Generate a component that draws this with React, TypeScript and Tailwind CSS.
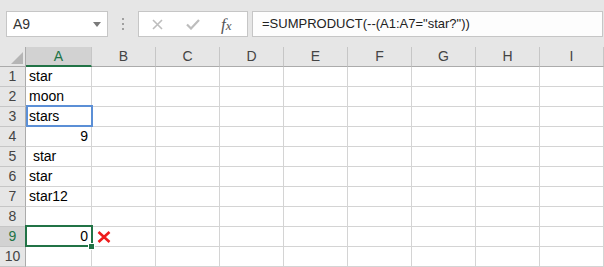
import React from 'react';

const COLS = ['A', 'B', 'C', 'D', 'E', 'F', 'G', 'H', 'I'];

// cell contents for column A, rows 1..10
const COL_A: { text: string; align?: 'right' }[] = [
  { text: 'star' },
  { text: 'moon' },
  { text: 'stars' },
  { text: '9', align: 'right' },
  { text: ' star' },
  { text: 'star' },
  { text: 'star12' },
  { text: '' },
  { text: '0', align: 'right' },
  { text: '' },
];

export default function App() {
  return (
    <div className="relative w-[604px] h-[267px] overflow-hidden bg-[#e6e6e6] font-['Liberation_Sans',Arial,sans-serif] text-[#222]">
      {/* formula bar */}
      <div className="h-[47px] flex items-start pt-[11px]">
        <div className="ml-[6px] w-[102px] h-[26px] bg-white border border-[#c6c6c6] flex items-center justify-between pl-[6px] pr-[6px]">
          <span className="text-[14px] text-[#333]">A9</span>
          <svg width="8" height="5" viewBox="0 0 8 5">
            <path d="M0 0 L8 0 L4 5 Z" fill="#7a7a7a" />
          </svg>
        </div>
        <div className="w-[30px] h-[26px] flex flex-col items-center justify-center gap-[3px]">
          <div className="w-[2px] h-[2px] bg-[#a0a0a0]" />
          <div className="w-[2px] h-[2px] bg-[#a0a0a0]" />
          <div className="w-[2px] h-[2px] bg-[#a0a0a0]" />
        </div>
        <div className="w-[110px] h-[26px] bg-white border border-[#c6c6c6] flex items-center">
          <svg className="ml-[13px]" width="11" height="11" viewBox="0 0 11 11">
            <path d="M1 1 L10 10 M10 1 L1 10" stroke="#bdbdbd" strokeWidth="1.6" />
          </svg>
          <svg className="ml-[23px]" width="14" height="11" viewBox="0 0 14 11">
            <path d="M1 5.5 L5 9.5 L13 1" stroke="#bdbdbd" strokeWidth="2.2" fill="none" />
          </svg>
          <span className="ml-[21px] font-['Liberation_Serif',serif] italic text-[17px] text-[#555] leading-none">
            f<span className="text-[13px]">x</span>
          </span>
        </div>
        <div className="ml-[4px] w-[351px] h-[26px] bg-[#fdfdfd] border border-[#c6c6c6] flex items-center pl-[9px]">
          <span className="text-[13px] text-[#222] whitespace-pre">=SUMPRODUCT(--(A1:A7="star?"))</span>
        </div>
      </div>

      {/* sheet grid */}
      <div className="grid grid-cols-[26px_66px_repeat(8,64px)] grid-rows-[20px_repeat(10,20px)]">
        {/* select-all corner */}
        <div className="border-r border-b border-[#ababab] flex items-end justify-end pr-[2px] pb-[2px]">
          <svg width="12" height="12" viewBox="0 0 12 12">
            <path d="M12 0 L12 12 L0 12 Z" fill="#b5b5b5" />
          </svg>
        </div>
        {COLS.map((c) =>
          c === 'A' ? (
            <div
              key={c}
              className="bg-[#d2d2d2] border-r border-[#c6c6c6] border-b-2 border-b-[#217346] flex items-center justify-center text-[14px] text-[#217346]"
            >
              {c}
            </div>
          ) : (
            <div
              key={c}
              className="border-r border-b border-[#c6c6c6] border-b-[#ababab] flex items-center justify-center text-[14px] text-[#444]"
            >
              {c}
            </div>
          )
        )}

        {COL_A.map((cell, i) => (
          <React.Fragment key={i}>
            <div
              className={
                i === 8
                  ? 'bg-[#d2d2d2] border-r border-b border-[#c6c6c6] border-r-[#ababab] flex items-center justify-center text-[14px] text-[#217346]'
                  : 'border-r border-b border-[#c6c6c6] border-r-[#ababab] flex items-center justify-center text-[14px] text-[#444]'
              }
            >
              {i + 1}
            </div>
            <div
              className={
                cell.align === 'right'
                  ? 'bg-white border-r border-b border-[#d4d4d4] flex items-center justify-end pr-[3px] text-[14px] text-black'
                  : 'bg-white border-r border-b border-[#d4d4d4] flex items-center pl-[3px] text-[14px] text-black whitespace-pre'
              }
            >
              {cell.text}
            </div>
            {COLS.slice(1).map((c) => (
              <div key={c} className="bg-white border-r border-b border-[#d4d4d4]" />
            ))}
          </React.Fragment>
        ))}
      </div>

      {/* highlighted A3 */}
      <div className="absolute left-[26px] top-[105px] w-[67px] h-[22px] border-2 border-[#5b8fd6]" />

      {/* active cell A9 */}
      <div className="absolute left-[25px] top-[225px] w-[68px] h-[22px] border-2 border-[#217346]" />
      <div className="absolute left-[88px] top-[243px] w-[7px] h-[7px] bg-[#217346] border border-white" />

      {/* red cross */}
      <svg className="absolute left-[97px] top-[231px]" width="14" height="12" viewBox="0 0 14 12">
        <path d="M1.5 1 L12.5 11 M12.5 1 L1.5 11" stroke="#ee1c1c" strokeWidth="2.6" />
      </svg>
    </div>
  );
}
